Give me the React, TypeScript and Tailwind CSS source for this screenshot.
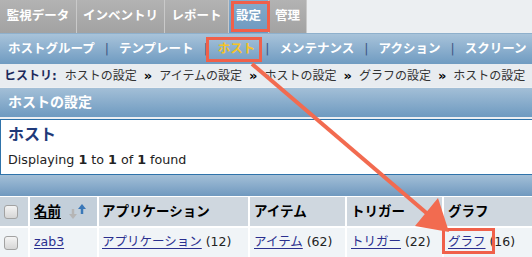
import React from 'react'

const font = "font-['DejaVu_Sans','Noto_Sans_CJK_JP',sans-serif]"

const tabs = [
  { label: '監視データ', w: 'w-[77px]' },
  { label: 'インベントリ', w: 'w-[88px]' },
  { label: 'レポート', w: 'w-[64px]' },
  { label: '設定', w: 'w-[40px]', active: true },
  { label: '管理', w: 'w-[38px]' },
]

const subnav = ['ホストグループ', 'テンプレート', 'ホスト', 'メンテナンス', 'アクション', 'スクリーン']

const history = ['ホストの設定', 'アイテムの設定', 'ホストの設定', 'グラフの設定', 'ホストの設定']

function Checkbox() {
  return (
    <div className="h-[14px] w-[14px] rounded-[3px] border border-[#a2a2a2] bg-gradient-to-b from-[#f4f4f4] to-[#d6d6d6]" />
  )
}

function SortIcon() {
  return (
    <svg width="20" height="18" viewBox="0 0 20 18" className="ml-[7px]">
      {/* grey down arrow */}
      <path d="M5 6v6" stroke="#b5b5b5" strokeWidth="2.5" />
      <path d="M1 11h8l-4 5z" fill="#b5b5b5" />
      {/* blue up arrow */}
      <path d="M14 5v6" stroke="#3a78b8" strokeWidth="2.5" />
      <path d="M10 6h8l-4-5z" fill="#3a78b8" />
    </svg>
  )
}

function Link({ children }: { children: React.ReactNode }) {
  return <span className="text-[#2a2f8f] underline underline-offset-2">{children}</span>
}

export default function App() {
  return (
    <div className={`relative h-[257px] w-[532px] overflow-hidden bg-[#eceff2] ${font}`}>
      {/* top tabs */}
      <div className="flex h-[34px] border-b border-[#8fb0cc]">
        {tabs.map((t) => (
          <div
            key={t.label}
            className={`${t.w} flex shrink-0 items-center justify-center border-r border-[#c9c9c9] text-[12.5px] font-bold text-white ${
              t.active
                ? 'bg-gradient-to-b from-[#86abcb] to-[#6d99c0]'
                : 'bg-gradient-to-b from-[#b3b3b3] to-[#a2a2a2]'
            }`}
          >
            {t.label}
          </div>
        ))}
      </div>

      {/* sub navigation */}
      <div className="flex h-[30px] items-center whitespace-nowrap bg-gradient-to-b from-[#a8c3da] to-[#6f9bc1] pl-[8px] text-[12.5px] font-bold text-white">
        {subnav.map((s, i) => (
          <React.Fragment key={s}>
            {i > 0 && <span className="mx-[10px] font-normal text-[#3d5684]">|</span>}
            <span className={s === 'ホスト' ? 'text-[#f6c326]' : ''}>{s}</span>
          </React.Fragment>
        ))}
      </div>

      {/* history */}
      <div className="flex h-[23px] items-center whitespace-nowrap bg-[#e8ecf0] pl-[4px] text-[12px] text-[#333]">
        <span className="mr-[8px] font-bold text-[#1d2a5c]">ヒストリ:</span>
        {history.map((h, i) => (
          <React.Fragment key={i}>
            {i > 0 && <span className="mx-[7px] text-[13px] font-bold text-black">»</span>}
            <span>{h}</span>
          </React.Fragment>
        ))}
      </div>

      {/* section header */}
      <div className="mt-[1px] flex h-[29px] items-center bg-gradient-to-b from-[#a3bfd7] to-[#6e9ac0] pl-[8px] text-[14px] font-bold text-white">
        ホストの設定
      </div>

      {/* host box */}
      <div className="mt-[2px] h-[56px] border-y border-l border-[#2f73aa] bg-white pl-[7px]">
        <div className="mt-[4px] text-[16px] font-bold leading-[22px] text-[#1f3a7a]">ホスト</div>
        <div className="mt-[4px] text-[12.7px] text-[#222]">
          Displaying <b>1</b> to <b>1</b> of <b>1</b> found
        </div>
      </div>

      {/* blue band */}
      <div className="h-[21px] bg-gradient-to-b from-[#a3bfd7] to-[#7099bf]" />

      {/* table */}
      <div className="grid grid-cols-[28px_67px_149px_95px_95px_1fr] gap-[2px] bg-white pt-[1px] text-[13.5px]">
        <div className="flex h-[29px] items-center bg-[#c9d3dc] pl-[4px]">
          <Checkbox />
        </div>
        <div className="flex h-[29px] items-center bg-[#c3cfda] pl-[4px] font-bold text-black">
          <span className="underline underline-offset-2">名前</span>
          <SortIcon />
        </div>
        <div className="flex items-center bg-[#cfd7df] pl-[3px] font-bold text-black">アプリケーション</div>
        <div className="flex items-center bg-[#cfd7df] pl-[4px] font-bold text-black">アイテム</div>
        <div className="flex items-center bg-[#cfd7df] pl-[4px] font-bold text-black">トリガー</div>
        <div className="flex items-center bg-[#cfd7df] pl-[4px] font-bold text-black">グラフ</div>

        <div className="flex h-[29px] items-center bg-[#f0f4f7] pl-[4px]">
          <Checkbox />
        </div>
        <div className="flex items-center bg-[#f0f4f7] pl-[4px] text-[12.5px]">
          <Link>zab3</Link>
        </div>
        <div className="flex items-center whitespace-nowrap bg-[#f0f4f7] pl-[3px] text-[12.5px] text-[#222]">
          <Link>アプリケーション</Link>&nbsp;(12)
        </div>
        <div className="flex items-center whitespace-nowrap bg-[#f0f4f7] pl-[4px] text-[12.5px] text-[#222]">
          <Link>アイテム</Link>&nbsp;(62)
        </div>
        <div className="flex items-center whitespace-nowrap bg-[#f0f4f7] pl-[4px] text-[12.5px] text-[#222]">
          <Link>トリガー</Link>&nbsp;(22)
        </div>
        <div className="flex items-center whitespace-nowrap bg-[#f0f4f7] pl-[4px] text-[12.5px] text-[#222]">
          <Link>グラフ</Link>&nbsp;(16)
        </div>
      </div>

      {/* annotation overlay */}
      <svg className="pointer-events-none absolute left-0 top-0" width="532" height="257" viewBox="0 0 532 257">
        <rect x="232.5" y="2.5" width="36" height="28" fill="none" stroke="#f0604a" strokeWidth="3" />
        <rect x="207.5" y="38.5" width="53" height="22" fill="none" stroke="#f0604a" strokeWidth="3" />
        <rect x="443.5" y="229.5" width="50" height="23" fill="none" stroke="#f0604a" strokeWidth="3" />
        <line x1="252" y1="64" x2="430" y2="216" stroke="#f26b50" strokeWidth="4" />
        <polygon points="449,232 415,226 438,198" fill="#f26b50" />
      </svg>
    </div>
  )
}
